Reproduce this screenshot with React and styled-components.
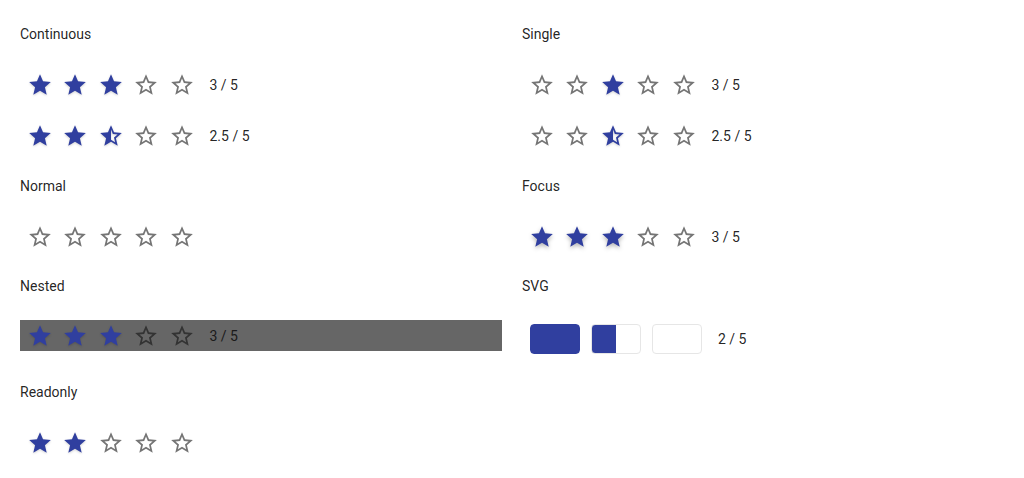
import React from 'react'
import styled, { createGlobalStyle } from 'styled-components'

const GlobalStyle = createGlobalStyle`
  html, body {
    margin: 0;
    padding: 0;
    background: #fff;
    font-family: Roboto, 'Liberation Sans', sans-serif;
    font-size: 14px;
    color: rgba(0, 0, 0, 0.87);
  }
`

const FULL = 'M12 17.27L18.18 21l-1.64-7.03L22 9.24l-7.19-.61L12 2 9.19 8.63 2 9.24l5.46 4.73L5.82 21z'
const EMPTY =
  'M22 9.24l-7.19-.62L12 2 9.19 8.63 2 9.24l5.46 4.73L5.82 21 12 17.27 18.18 21l-1.63-7.03L22 9.24zM12 15.4l-3.76 2.27 1-4.28-3.32-2.88 4.38-.38L12 6.1l1.71 4.04 4.38.38-3.32 2.88 1 4.28L12 15.4z'
const HALF =
  'M22 9.24l-7.19-.62L12 2 9.19 8.63 2 9.24l5.46 4.73L5.82 21 12 17.27 18.18 21l-1.63-7.03L22 9.24zM12 15.4V6.1l1.71 4.04 4.38.38-3.32 2.88 1 4.28L12 15.4z'

const Page = styled.div`
  display: grid;
  grid-template-columns: 482px 482px;
  column-gap: 20px;
  padding: 24px 20px 0 20px;
  align-items: start;
`

const Column = styled.div`
  display: flex;
  flex-direction: column;
`

const Section = styled.div`
  display: flex;
  flex-direction: column;
  margin-bottom: ${(p) => p.$after || 21}px;
`

const Label = styled.div`
  height: 20px;
  line-height: 20px;
  margin-bottom: ${(p) => p.$gap || 23}px;
`

const Rows = styled.div`
  display: flex;
  flex-direction: column;
  gap: 15px;
`

const Row = styled.div`
  display: flex;
  align-items: center;
  height: ${(p) => p.$h || 36}px;
  padding-left: 2px;
  background: ${(p) => p.$bg || 'transparent'};
`

const StarBox = styled.span`
  width: 35.5px;
  height: 26px;
  display: flex;
  justify-content: center;
  align-items: center;
  svg {
    width: 26px;
    height: 26px;
    fill: ${(p) => (p.$on ? '#303f9f' : p.$dim || '#757575')};
    filter: ${(p) =>
      !p.$on
        ? 'none'
        : p.$focus
        ? 'drop-shadow(0 2px 2px rgba(0,0,0,0.3))'
        : 'drop-shadow(0 1px 1px rgba(0,0,0,0.18))'};
  }
`

const Value = styled.span`
  margin-left: 10px;
  line-height: 20px;
  color: ${(p) => p.$color || 'rgba(0,0,0,0.87)'};
`

const Star = ({ kind, focus, dim }) => (
  <StarBox $on={kind !== 'empty'} $focus={focus} $dim={dim}>
    <svg viewBox="0 0 24 24">
      <path d={kind === 'full' ? FULL : kind === 'half' ? HALF : EMPTY} />
    </svg>
  </StarBox>
)

const Stars = ({ kinds, value, focus, dim, valueColor }) => (
  <>
    {kinds.map((k, i) => (
      <Star key={i} kind={k} focus={focus} dim={dim} />
    ))}
    {value && <Value $color={valueColor}>{value}</Value>}
  </>
)

const Blocks = styled.div`
  display: flex;
  align-items: center;
  gap: 11px;
  padding-left: 8px;
  height: 30px;
`

const Block = styled.div`
  width: 50px;
  height: 30px;
  box-sizing: border-box;
  border-radius: 4px;
  border: 1px solid ${(p) => (p.$fill >= 1 ? '#303f9f' : '#e6e6e6')};
  background: ${(p) =>
    `linear-gradient(to right, #303f9f ${p.$fill * 100}%, #fff ${p.$fill * 100}%)`};
`

const BlockValue = styled.span`
  margin-left: 5px;
  line-height: 20px;
`

const F = 'full'
const H = 'half'
const E = 'empty'

export default function App() {
  return (
    <>
      <GlobalStyle />
      <Page>
        <Column>
          <Section $after={22}>
            <Label>Continuous</Label>
            <Rows>
              <Row>
                <Stars kinds={[F, F, F, E, E]} value="3 / 5" />
              </Row>
              <Row>
                <Stars kinds={[F, F, H, E, E]} value="2.5 / 5" />
              </Row>
            </Rows>
          </Section>
          <Section $after={21}>
            <Label>Normal</Label>
            <Row>
              <Stars kinds={[E, E, E, E, E]} />
            </Row>
          </Section>
          <Section $after={31}>
            <Label $gap={24}>Nested</Label>
            <Row $h={31} $bg="#666666">
              <Stars kinds={[F, F, F, E, E]} value="3 / 5" dim="#333333" valueColor="#1a1a1a" />
            </Row>
          </Section>
          <Section>
            <Label $gap={23}>Readonly</Label>
            <Row>
              <Stars kinds={[F, F, E, E, E]} />
            </Row>
          </Section>
        </Column>
        <Column>
          <Section $after={22}>
            <Label>Single</Label>
            <Rows>
              <Row>
                <Stars kinds={[E, E, F, E, E]} value="3 / 5" />
              </Row>
              <Row>
                <Stars kinds={[E, E, H, E, E]} value="2.5 / 5" />
              </Row>
            </Rows>
          </Section>
          <Section $after={21}>
            <Label>Focus</Label>
            <Row>
              <Stars kinds={[F, F, F, E, E]} value="3 / 5" focus />
            </Row>
          </Section>
          <Section>
            <Label $gap={28}>SVG</Label>
            <Blocks>
              <Block $fill={1} />
              <Block $fill={0.5} />
              <Block $fill={0} />
              <BlockValue>2 / 5</BlockValue>
            </Blocks>
          </Section>
        </Column>
      </Page>
    </>
  )
}
